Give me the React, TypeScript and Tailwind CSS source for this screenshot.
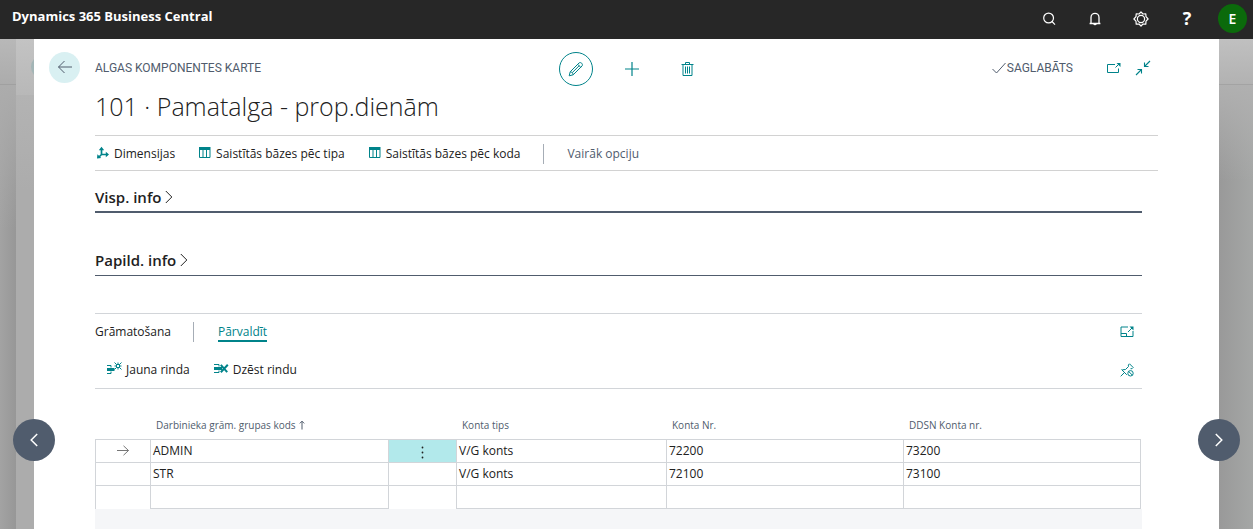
import type { ReactNode } from 'react';

type IconProps = { className?: string };

const SearchIcon = () => (
  <svg className="size-4" viewBox="0 0 16 16" fill="none" stroke="currentColor" strokeWidth="1.2">
    <circle cx="7.6" cy="7" r="4.9" />
    <path d="M11 10.500 14 13.600" />
  </svg>
);

const BellIcon = () => (
  <svg className="size-4" viewBox="0 0 16 16" fill="none" stroke="currentColor" strokeWidth="1.3">
    <path d="M2.6 12.5h10.8M4 12.5V6.4a4 4 0 0 1 8 0v6.1M6.7 12.8a1.4 1.4 0 0 0 2.6 0" />
  </svg>
);

const GearIcon = () => (
  <svg className="size-4" viewBox="0 0 16 16" fill="none" stroke="currentColor" strokeWidth="1.2" strokeLinejoin="round">
    <path d="M8 .9 9.9 3l2.9-.2L13 5.7 15.1 8 13 10.2l-.2 2.9-2.9-.1L8 15.1 6.1 13l-2.9.1L3 10.2.9 8 3 5.7l.2-2.9L6.1 3Z" />
    <circle cx="8" cy="8" r="3.6" />
  </svg>
);

const BackIcon = () => (
  <svg className="size-4" viewBox="0 0 16 16" fill="none" stroke="currentColor" strokeWidth="1">
    <path d="M15 8H1.5M7.5 2 1.5 8l6 6" />
  </svg>
);

const PencilIcon = () => (
  <svg className="size-4" viewBox="0 0 16 16" fill="none" stroke="currentColor" strokeWidth="1" strokeLinejoin="round">
    <path d="m1.2 14.8 1-4L11 2c1.700-1.500 4.500 1.200 3 3L5.200 13.800ZM2.200 10.800c1.600.1 2.900 1.400 3 3M9.700 3.300l3 3M4.200 11.700l7.200-7.200" />
  </svg>
);

const PlusIcon = () => (
  <svg className="size-4" viewBox="0 0 16 16" fill="none" stroke="currentColor" strokeWidth="1.2">
    <path d="M8 1v14M1 8h14" />
  </svg>
);

const TrashIcon = () => (
  <svg className="size-4" viewBox="0 0 16 16" fill="none" stroke="currentColor" strokeWidth="1">
    <path d="M1.500 3.500h12M5.500 3.500v-2h4v2M3 3.500v11h9v-11" />
    <path d="M5.500 5.500v7M7.500 5.500v7M9.500 5.500v7" />
  </svg>
);

const CheckIcon = () => (
  <svg className="h-3 w-4" viewBox="0 0 16 12" fill="none" stroke="currentColor" strokeWidth="1">
    <path d="m1.500 7 4 4L14.500 1" />
  </svg>
);

const PopOutIcon = () => (
  <svg className="size-4" viewBox="0 0 16 16" fill="none" stroke="currentColor" strokeWidth="1">
    <path d="M10 4.500H2.500v8h11V8.500M10.500 7.500l3.500-3.500" />
    <path d="M11.500 3H15.500v4Z" fill="currentColor" stroke="none" />
  </svg>
);

const CollapseIcon = () => (
  <svg className="size-4" viewBox="0 0 16 16" fill="none" stroke="currentColor" strokeWidth="1.100">
    <path d="m15 1-5.500 5.500M9.500 2.500v4h4M1 15l5.500-5.500M2.500 9.500h4v4" />
  </svg>
);

const DimensionsIcon = () => (
  <svg className="size-3.5" viewBox="0 0 14 14" fill="none" stroke="currentColor" strokeWidth="1.700">
    <path d="M5.500 3v5.500H11M5.500 8.500 3 11" />
    <path d="M5.500.8 8.200 4.200H2.800ZM13 8.500l-3.200 2.700V5.800ZM1 12.500l.4-4.200 3.800 3.800Z" fill="currentColor" stroke="none" />
  </svg>
);

const TableIcon = () => (
  <svg className="h-3 w-3.5" viewBox="0 0 14 12" fill="none" stroke="currentColor">
    <path d="M1.500 3v7.500h10.500V3M5 3v7.500M8.500 3v7.500" strokeWidth="1" />
    <path d="M1 1.500h11.500" strokeWidth="3" />
  </svg>
);

const ChevronRight = ({ className }: IconProps) => (
  <svg className={className} viewBox="0 0 8 14" fill="none" stroke="currentColor">
    <path d="m.8 1 6 6-6 6" />
  </svg>
);

const NewLineIcon = () => (
  <svg className="h-3.5 w-4" viewBox="0 0 16 14" fill="none" stroke="currentColor">
    <path d="M1 3.500h4v2M1 11.500h4v-2" />
    <path d="M1 7.500h7.500" strokeWidth="3" />
    <path d="M10.500 2.500h3v3h-3ZM8.500.5l2 2M15.500.5l-2 2M8.500 7.500l2-2M15.500 7.500l-2-2M12 .5v2M12 5.500v2M8.500 4h2M13.500 4h2" />
  </svg>
);

const DeleteLineIcon = () => (
  <svg className="h-3.5 w-4" viewBox="0 0 16 14" fill="none" stroke="currentColor">
    <path d="M1 2.500h5v2M1 10.500h5v-2" />
    <path d="M1 6.500h8" strokeWidth="3" />
    <path d="m7.800 2.800 6.400 7.400M14.800 2.800l-7 7.400" strokeWidth="2" />
  </svg>
);

const FocusIcon = () => (
  <svg className="size-3.5" viewBox="0 0 14 14" fill="none" stroke="currentColor">
    <path d="M8 2H1v9.500h12V6M1 8.500h5.500v3M8 7l4-4" />
    <path d="M9.500 1.500H13.500v4Z" fill="currentColor" stroke="none" />
  </svg>
);

const PinOffIcon = () => (
  <svg className="size-3.5" viewBox="0 0 14 14" fill="none" stroke="currentColor">
    <path d="m.7 13.300 3.800-3.800M1.500 6.500 6.800 11.800M2.300 6.800l3.200-.3 3-3L8.300 2l1.200-1.200 3.700 3.700L12 5.700h-1.500" />
    <circle cx="10.500" cy="10.300" r="2.700" />
    <path d="m8.600 8.400 3.800 3.800" />
  </svg>
);

const RowArrow = () => (
  <svg className="mx-auto h-3 w-3.5" viewBox="0 0 14 12" fill="none" stroke="#767676">
    <path d="M1 5.500h11.500M7.500.8l5 4.700-5 4.700" />
  </svg>
);

const SortArrow = () => (
  <svg className="h-2.5 w-2" viewBox="0 0 8 10" fill="none" stroke="currentColor">
    <path d="M4 9.500V1.200M1.800 3.400 4 1.200l2.200 2.200" />
  </svg>
);

function Action({ icon, children }: { icon: ReactNode; children: ReactNode }) {
  return (
    <button type="button" className="flex items-center gap-1 whitespace-nowrap">
      <span className="pb-0.5 text-[#00838a]">{icon}</span>
      {children}
    </button>
  );
}

function HeaderButton({ label, children }: { label: string; children: ReactNode }) {
  return (
    <button type="button" aria-label={label} className="flex w-[46px] items-center justify-center">
      {children}
    </button>
  );
}

const rows = [
  { code: 'ADMIN', type: 'V/G konts', account: '72200', ddsn: '73200', active: true },
  { code: 'STR', type: 'V/G konts', account: '72100', ddsn: '73100', active: false },
  { code: '', type: '', account: '', ddsn: '', active: false },
];

export default function App() {
  return (
    <div className="relative flex h-screen flex-col overflow-hidden bg-white font-['Open_Sans','Noto_Sans',sans-serif] text-[12px] text-[#212121]">
      <header className="flex h-[39px] shrink-0 items-center justify-between bg-[#272727] pr-1.5 pl-3 text-white">
        <h1 className="pb-1.5 text-[13px] font-bold">Dynamics 365 Business Central</h1>
        <div className="flex h-full items-center pb-0.5">
          <HeaderButton label="Meklēt"><SearchIcon /></HeaderButton>
          <HeaderButton label="Paziņojumi"><BellIcon /></HeaderButton>
          <HeaderButton label="Iestatījumi"><GearIcon /></HeaderButton>
          <HeaderButton label="Palīdzība">
            <span className="text-[18px] font-bold">?</span>
          </HeaderButton>
          <button type="button" className="ml-2 size-[29px] rounded-full bg-[#0b6a0b] text-[14px] font-semibold">E</button>
        </div>
      </header>

      <div className="flex min-h-0 flex-1">
        <div className="flex w-[34px] shrink-0" aria-hidden="true">
          <div className="w-4 bg-linear-to-r from-[#a3a3a3] to-[#979797]">
            <div className="h-[46px] border-b border-[#a0a0a0] bg-linear-to-b from-[#b8b8b8] to-[#acacac]" />
            <div className="h-36 bg-linear-to-b from-[#acacac] to-transparent" />
          </div>
          <div className="w-[18px] overflow-hidden bg-[#acacac]">
            <div className="h-14 bg-linear-to-b from-[#c3c3c3] to-[#b8b8b8] pt-4 pl-[15px]">
              <div className="size-6 rounded-full bg-[#a3b5b6]" />
            </div>
            <div className="h-24 bg-linear-to-b from-[#b3b3b3] to-transparent" />
          </div>
        </div>

        <main className="min-w-0 flex-1 pr-[61px] pl-[61px]">
          <div className="grid h-14 grid-cols-[1fr_auto_1fr] items-center">
            <div className="-ml-[46px] flex items-center gap-[15px]">
              <button type="button" aria-label="Atpakaļ" className="flex size-[31px] items-center justify-center rounded-full bg-[#d9f0f2] text-[#505c6d]">
                <BackIcon />
              </button>
              <span className="pt-0.5 font-[Roboto,sans-serif] text-[12px] text-[#505c6d]">ALGAS KOMPONENTES KARTE</span>
            </div>
            <div className="flex items-center gap-[22px] pt-1 pl-2.5 text-[#00838a]">
              <button type="button" aria-label="Rediģēt" className="flex size-[34px] items-center justify-center rounded-full border border-[#00838a]"><PencilIcon /></button>
              <button type="button" aria-label="Jauns" className="flex size-[34px] items-center justify-center"><PlusIcon /></button>
              <button type="button" aria-label="Dzēst" className="flex size-[34px] items-center justify-center"><TrashIcon /></button>
            </div>
            <div className="flex items-center justify-end gap-3.5 pt-0.5 pr-[7px] text-[#00838a]">
              <span className="mr-[18px] flex items-center font-[Roboto,sans-serif] text-[12px] text-[#505c6d]">
                <CheckIcon />SAGLABĀTS
              </span>
              <button type="button" aria-label="Atvērt jaunā logā"><PopOutIcon /></button>
              <button type="button" aria-label="Sakļaut"><CollapseIcon /></button>
            </div>
          </div>

          <h2 className="h-10 text-[25px] leading-[22px] font-light whitespace-nowrap">101 · Pamatalga - prop.dienām</h2>

          <div className="flex h-9 items-center gap-[23px] border-y border-[#d2d2d2] pt-0.5 pl-px">
            <Action icon={<DimensionsIcon />}>Dimensijas</Action>
            <Action icon={<TableIcon />}>Saistītās bāzes pēc tipa</Action>
            <Action icon={<TableIcon />}>Saistītās bāzes pēc koda</Action>
            <div className="h-5 w-px bg-[#a6adb6]" />
            <button type="button" className="text-[#505c6d]">Vairāk opciju</button>
          </div>

          <div className="pr-4">
            <button type="button" className="flex h-[42px] w-full items-center gap-1 border-b-2 border-[#505c6d] pt-3 text-[15px] font-semibold">
              Visp. info
              <ChevronRight className="h-3.5 w-2" />
            </button>
            <button type="button" className="flex h-[63px] w-full items-end gap-1 border-b border-[#505c6d] pb-1 text-[15px] font-semibold">
              Papild. info
              <ChevronRight className="mb-1 h-3.5 w-2" />
            </button>

            <section className="mt-[37px] border-t border-[#d2d5d9]">
              <div className="flex h-9 items-center">
                <h3 className="font-medium">Grāmatošana</h3>
                <div className="mr-6 ml-[22px] h-5 w-px bg-[#a6adb6]" />
                <button type="button" className="border-b-2 border-[#00838a] pt-0.5 leading-4 text-[#00838a]">Pārvaldīt</button>
                <button type="button" aria-label="Fokusa režīms" className="mr-2 ml-auto text-[#00838a]"><FocusIcon /></button>
              </div>
              <div className="flex h-[39px] items-center gap-[23px] border-b border-[#d2d5d9] pt-px pl-[11px]">
                <Action icon={<NewLineIcon />}>Jauna rinda</Action>
                <Action icon={<DeleteLineIcon />}>Dzēst rindu</Action>
                <button type="button" aria-label="Atspraust" className="mr-2 ml-auto text-[#00838a]"><PinOffIcon /></button>
              </div>

              <div className="pr-px">
                <table className="w-full table-fixed border-separate border-spacing-0 text-left">
                  <colgroup>
                    <col className="w-[55px]" />
                    <col className="w-[238px]" />
                    <col className="w-[68px]" />
                    <col className="w-[210px]" />
                    <col className="w-[237px]" />
                    <col className="w-[238px]" />
                  </colgroup>
                  <thead>
                    <tr className="h-[50px] text-[10px] text-[#505c6d]">
                      <th />
                      <th className="pt-[22px] pl-1.5 font-normal">
                        <span className="flex items-center gap-0.5">Darbinieka grām. grupas kods<SortArrow /></span>
                      </th>
                      <th />
                      <th className="pt-[22px] pl-1.5 font-normal">Konta tips</th>
                      <th className="pt-[22px] pl-1.5 font-normal">Konta Nr.</th>
                      <th className="pt-[22px] pl-1.5 font-normal">DDSN Konta nr.</th>
                    </tr>
                  </thead>
                  <tbody className="[&_td]:border-t [&_td]:border-l [&_td]:border-[#d2d5d9] [&_td]:py-0 [&_td]:pr-0.5 [&_td]:pl-0.5">
                    {rows.map((row, i) => {
                      const bottom = i === rows.length - 1 ? 'border-b' : '';
                      return (
                        <tr key={i} className={i === rows.length - 1 ? 'h-6' : 'h-[23px]'}>
                          <td>{row.active && <RowArrow />}</td>
                          <td className={bottom}>{row.code}</td>
                          <td className={row.active ? 'bg-[#b2e9eb] text-center' : ''}>
                            {row.active && (
                              <button type="button" aria-label="Rādīt vairāk opciju" className="align-middle">
                                <svg className="h-3.5 w-2" viewBox="0 0 8 14" fill="currentColor">
                                  <circle cx="3.500" cy="2.500" r=".9" />
                                  <circle cx="3.500" cy="7.500" r=".9" />
                                  <circle cx="3.500" cy="12.500" r=".9" />
                                </svg>
                              </button>
                            )}
                          </td>
                          <td className={bottom}>{row.type}</td>
                          <td className={bottom}>{row.account}</td>
                          <td className={`border-r ${bottom}`}>{row.ddsn}</td>
                        </tr>
                      );
                    })}
                  </tbody>
                </table>
              </div>
              <div className="h-8 bg-[#f5f6f8]" />
            </section>
          </div>
        </main>

        <div className="w-[34px] shrink-0 bg-linear-to-r from-[#999] to-[#a5a7a6]" aria-hidden="true">
          <div className="h-[46px] border-b border-[#a3a3a3] bg-linear-to-b from-[#c0c0c0] to-[#b2b2b2]" />
          <div className="h-24 bg-linear-to-b from-[#b0b0b0] to-transparent" />
        </div>
      </div>

      <button type="button" aria-label="Iepriekšējais" className="absolute top-[419px] left-[13px] flex size-[42px] items-center justify-center rounded-full bg-[#505c6d] text-white">
        <ChevronRight className="h-3.5 w-2 rotate-180 stroke-[1.5]" />
      </button>
      <button type="button" aria-label="Nākamais" className="absolute top-[419px] right-[13px] flex size-[42px] items-center justify-center rounded-full bg-[#505c6d] text-white">
        <ChevronRight className="h-3.5 w-2 stroke-[1.5]" />
      </button>
    </div>
  );
}
